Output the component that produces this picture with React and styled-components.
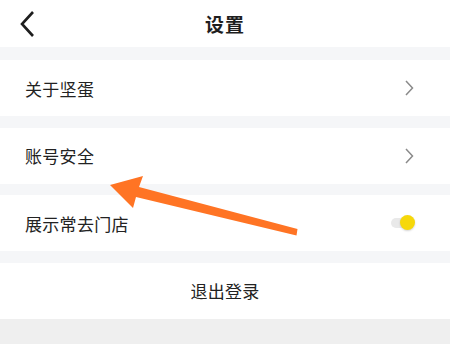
import React from "react";
import styled, { createGlobalStyle } from "styled-components";

const GlobalStyle = createGlobalStyle`
  html, body {
    margin: 0;
    padding: 0;
    background: #efefef;
    font-family: "Noto Sans CJK SC", "Noto Sans", sans-serif;
  }
`;

const Page = styled.div`
  position: relative;
  width: 450px;
  height: 344px;
  overflow: hidden;
  background: #efefef;
`;

const Header = styled.div`
  height: 47px;
  background: #fff;
  display: flex;
  align-items: center;
  justify-content: center;
  position: relative;
`;

const BackButton = styled.div`
  position: absolute;
  left: 19px;
  top: 10px;
  width: 18px;
  height: 28px;
  display: flex;
`;

const Title = styled.h1`
  margin: 0;
  font-size: 19px;
  font-weight: 700;
  color: #1e1e1e;
  letter-spacing: 1px;
`;

const List = styled.div`
  background: #f5f6f8;
  padding-top: 13px;
  display: flex;
  flex-direction: column;
  gap: 11.5px;
`;

const Row = styled.div`
  height: 56px;
  background: #fff;
  display: flex;
  align-items: center;
  justify-content: ${(p) => (p.$center ? "center" : "space-between")};
  padding-left: ${(p) => (p.$center ? "0" : "25px")};
  padding-right: ${(p) => (p.$center ? "0" : "36px")};
`;

const Label = styled.span`
  font-size: 17px;
  color: #222;
  letter-spacing: 0.3px;
`;

const Toggle = styled.div`
  position: relative;
  width: 24px;
  height: 16px;
  margin-right: -1px;
`;

const Track = styled.div`
  position: absolute;
  left: 0;
  top: 3px;
  width: 20px;
  height: 10px;
  border-radius: 5px;
  background: #e9e9e9;
`;

const Knob = styled.div`
  position: absolute;
  right: 0;
  top: 0;
  width: 15px;
  height: 15px;
  border-radius: 50%;
  background: #f6d80a;
  box-shadow: 0 1px 2px rgba(0, 0, 0, 0.18);
`;

const Overlay = styled.svg`
  position: absolute;
  left: 0;
  top: 0;
  pointer-events: none;
`;

function Chevron() {
  return (
    <svg width="10" height="18" viewBox="0 0 10 18">
      <path d="M2 2 L8.5 9 L2 16" fill="none" stroke="#8a8a8a" strokeWidth="1.5" />
    </svg>
  );
}

export default function App() {
  return (
    <Page>
      <GlobalStyle />
      <Header>
        <BackButton>
          <svg width="18" height="28" viewBox="0 0 18 28">
            <path d="M14 2 L3 14 L14 26" fill="none" stroke="#1e1e1e" strokeWidth="2.6" />
          </svg>
        </BackButton>
        <Title>设置</Title>
      </Header>
      <List>
        <Row>
          <Label>关于坚蛋</Label>
          <Chevron />
        </Row>
        <Row>
          <Label>账号安全</Label>
          <Chevron />
        </Row>
        <Row>
          <Label>展示常去门店</Label>
          <Toggle>
            <Track />
            <Knob />
          </Toggle>
        </Row>
        <Row $center>
          <Label>退出登录</Label>
        </Row>
      </List>
      {/* annotation arrow drawn over the list */}
      <Overlay width="450" height="344" viewBox="0 0 450 344">
        <polygon
          points="110,185 143,176 139,187 297.5,229 296.5,235.5 136,197 133,208"
          fill="#ff7424"
        />
      </Overlay>
    </Page>
  );
}
